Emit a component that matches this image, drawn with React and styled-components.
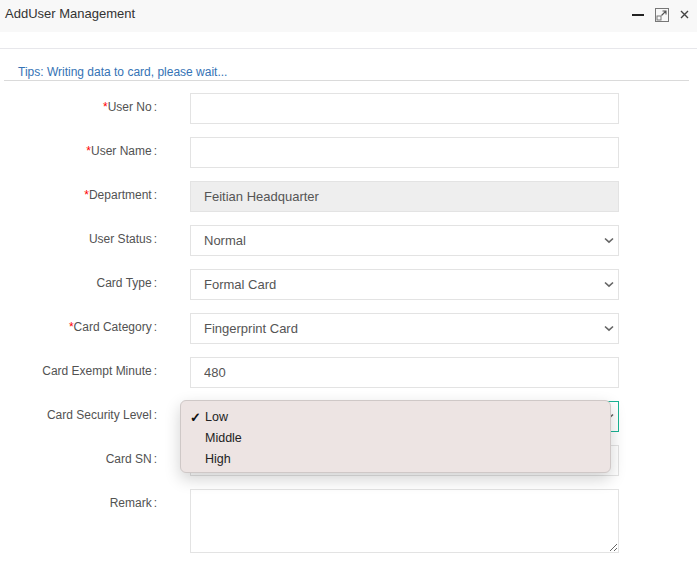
import React from 'react';
import styled, { createGlobalStyle } from 'styled-components';

const GlobalStyle = createGlobalStyle`
  html, body {
    margin: 0;
    padding: 0;
    background: #fff;
  }
  body {
    font-family: 'Liberation Sans', Arial, Helvetica, sans-serif;
    color: #333;
  }
`;

const StyledWindow = styled.div`
  width: 697px;
  height: 571px;
  overflow: hidden;
  background: #fff;
`;

const StyledHeader = styled.div`
  height: 32px;
  background: #f8f8f8;
  display: flex;
  align-items: center;
  justify-content: space-between;
  padding: 0 8px 0 5px;
  box-sizing: border-box;
`;

const StyledTitle = styled.h1`
  margin: 0;
  font-size: 13px;
  font-weight: normal;
  color: #333;
  margin-top: -5px;
`;

const StyledTools = styled.div`
  display: flex;
  align-items: center;
  gap: 11px;
  margin-top: -3px;
`;

const StyledDivider = styled.div`
  margin-top: 16px;
  border-top: 1px solid #e7e7eb;
`;

const StyledTips = styled.p`
  margin: 16px 8px 0 4px;
  padding: 0 0 1px 14px;
  font-size: 12px;
  line-height: 14px;
  color: #3573b5;
  border-bottom: 1px solid #dadada;
`;

const StyledForm = styled.form`
  margin-top: 12px;
  display: flex;
  flex-direction: column;
  gap: 13px;
`;

const StyledRow = styled.div`
  display: grid;
  grid-template-columns: 157px 429px;
  column-gap: 33px;
  align-items: start;
`;

const StyledLabel = styled.label`
  text-align: right;
  font-size: 12px;
  line-height: 29px;
  color: #525252;
  white-space: nowrap;

  span {
    color: #f00;
  }

  i {
    font-style: normal;
    margin-left: 2px;
  }
`;

const StyledField = styled.div`
  position: relative;
`;

const StyledInput = styled.input`
  display: block;
  width: 100%;
  height: 31px;
  box-sizing: border-box;
  border: 1px solid ${({ $focus }) => ($focus ? '#1ab394' : '#e3e3e3')};
  background: ${({ disabled }) => (disabled ? '#eeeeee' : '#fff')};
  padding: 0 13px;
  font-family: inherit;
  font-size: 13px;
  color: #555;
  outline: none;
  appearance: none;
`;

const StyledTextarea = styled.textarea`
  display: block;
  width: 100%;
  height: 64px;
  box-sizing: border-box;
  border: 1px solid #e3e3e3;
  padding: 6px 13px;
  font-family: inherit;
  font-size: 13px;
  color: #555;
  outline: none;
`;

const StyledChevron = styled.svg`
  position: absolute;
  right: 5px;
  top: 12px;
  pointer-events: none;
`;

const StyledMenu = styled.ul`
  position: absolute;
  left: -10px;
  top: -1px;
  width: 431px;
  height: 73px;
  box-sizing: border-box;
  margin: 0;
  padding: 6px 0 0;
  list-style: none;
  background: #ede4e3;
  border: 1px solid #cfc8c7;
  border-radius: 6px;
  box-shadow: 0 6px 16px rgba(0, 0, 0, 0.18);
  z-index: 2;
`;

const StyledOption = styled.li`
  position: relative;
  height: 21px;
  line-height: 21px;
  padding-left: 24px;
  font-size: 12.5px;
  color: #222;
`;

const StyledCheck = styled.span`
  position: absolute;
  left: 9px;
  top: 0;
  font-size: 13px;
  font-weight: bold;
  color: #111;
`;

const Chevron = () => (
  <StyledChevron width="10" height="7" viewBox="0 0 10 7">
    <path d="M1 1.5 L5 5.2 L9 1.5" fill="none" stroke="#666" strokeWidth="1.6" />
  </StyledChevron>
);

const SelectField = ({ value, focus, children }) => (
  <StyledField>
    <StyledInput as="div" $focus={focus} style={{ lineHeight: '29px' }}>
      {value}
    </StyledInput>
    <Chevron />
    {children}
  </StyledField>
);

const Label = ({ required, children }) => (
  <StyledLabel>
    {required && <span>*</span>}
    {children}
    <i>:</i>
  </StyledLabel>
);

const AddUserTemplate = () => (
  <StyledWindow>
    <StyledHeader>
      <StyledTitle>AddUser Management</StyledTitle>
      <StyledTools>
        <svg width="12" height="12" viewBox="0 0 12 12">
          <rect x="0" y="5" width="12" height="2" fill="#222" />
        </svg>
        <svg width="14" height="14" viewBox="0 0 14 14">
          <rect x="0.5" y="0.5" width="13" height="13" fill="none" stroke="#777" />
          <rect x="2" y="8" width="4" height="4" fill="none" stroke="#777" />
          <path d="M6.5 7.5 L11 3 M7.5 3 H11 V6.5" fill="none" stroke="#555" strokeWidth="1.1" />
        </svg>
        <svg width="9" height="9" viewBox="0 0 9 9">
          <path d="M1 1 L8 8 M8 1 L1 8" stroke="#444" strokeWidth="1.4" />
        </svg>
      </StyledTools>
    </StyledHeader>
    <StyledDivider />
    <StyledTips>Tips: Writing data to card, please wait...</StyledTips>
    <StyledForm>
      <StyledRow>
        <Label required>User No</Label>
        <StyledInput />
      </StyledRow>
      <StyledRow>
        <Label required>User Name</Label>
        <StyledInput />
      </StyledRow>
      <StyledRow>
        <Label required>Department</Label>
        <StyledInput disabled defaultValue="Feitian Headquarter" />
      </StyledRow>
      <StyledRow>
        <Label>User Status</Label>
        <SelectField value="Normal" />
      </StyledRow>
      <StyledRow>
        <Label>Card Type</Label>
        <SelectField value="Formal Card" />
      </StyledRow>
      <StyledRow>
        <Label required>Card Category</Label>
        <SelectField value="Fingerprint Card" />
      </StyledRow>
      <StyledRow>
        <Label>Card Exempt Minute</Label>
        <StyledInput defaultValue="480" />
      </StyledRow>
      <StyledRow>
        <Label>Card Security Level</Label>
        <SelectField value="Low" focus>
          <StyledMenu>
            <StyledOption>
              <StyledCheck>✓</StyledCheck>Low
            </StyledOption>
            <StyledOption>Middle</StyledOption>
            <StyledOption>High</StyledOption>
          </StyledMenu>
        </SelectField>
      </StyledRow>
      <StyledRow>
        <Label>Card SN</Label>
        <StyledInput />
      </StyledRow>
      <StyledRow>
        <Label>Remark</Label>
        <StyledTextarea />
      </StyledRow>
    </StyledForm>
  </StyledWindow>
);

const App = () => (
  <>
    <GlobalStyle />
    <AddUserTemplate />
  </>
);

export default App;
